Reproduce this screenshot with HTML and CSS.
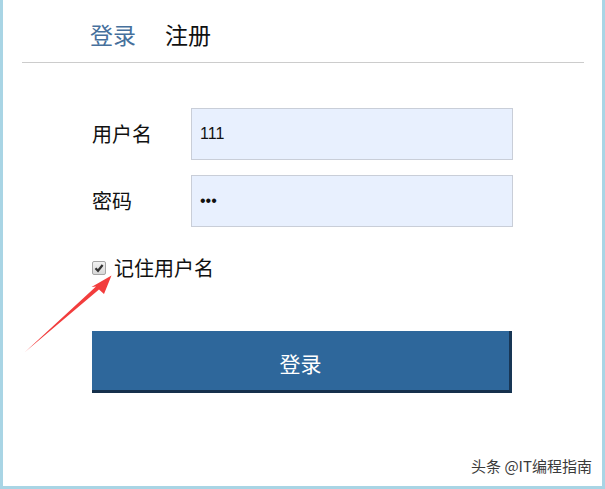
FILE: index.html
```html
<!DOCTYPE html>
<html lang="zh-CN">
<head>
<meta charset="utf-8">
<title>登录</title>
<link rel="stylesheet" href="styles.css">
</head>
<body>
<div class="frame">
  <div class="tabs">
    <span class="tab active">登录</span>
    <span class="tab">注册</span>
  </div>
  <div class="divider"></div>
  <form class="form">
    <div class="row">
      <label class="label">用户名</label>
      <input class="field" type="text" value="111">
    </div>
    <div class="row">
      <label class="label">密码</label>
      <input class="field" type="password" value="111">
    </div>
    <div class="remember">
      <span class="check"><svg width="10" height="10" viewBox="0 0 10 10"><path d="M1.5 5.2 L4 7.8 L8.6 2" fill="none" stroke="#333" stroke-width="2.2"/></svg></span>
      <span class="remember-text">记住用户名</span>
    </div>
    <button class="submit" type="button">登录</button>
  </form>
  <div class="watermark">头条 @IT编程指南</div>
</div>
<svg class="arrow" width="605" height="489" viewBox="0 0 605 489">
  <polygon points="25,352 96,286.5 91.5,287 111.5,275.5 104,294 99,289.5" fill="#f23d3d"/>
</svg>
</body>
</html>
```
FILE: styles.css
```css
html, body {
  margin: 0;
  padding: 0;
  background: #ffffff;
}
body {
  font-family: "Noto Sans CJK SC", "Noto Sans", sans-serif;
  color: #111;
}
.frame {
  position: relative;
  box-sizing: border-box;
  width: 605px;
  height: 489px;
  border: 3px solid #a9d5e5;
  border-top: none;
  background: #fff;
}
.tabs {
  display: flex;
  padding: 19px 0 0 87px;
  height: 30px;
  padding-bottom: 13px;
  align-items: center;
}
.tab {
  font-size: 23px;
  line-height: 30px;
  margin-right: 29px;
  color: #111;
}
.tab.active {
  color: #46709c;
}
.divider {
  height: 1px;
  background: #cccccc;
  margin: 0 18px 0 19px;
}
.form {
  display: flex;
  flex-direction: column;
  padding: 45px 0 0 89px;
  margin: 0;
}
.row {
  display: flex;
  align-items: center;
  height: 52px;
  margin-bottom: 15px;
}
.label {
  width: 99px;
  font-size: 20px;
  line-height: 24px;
  color: #111;
}
.field {
  box-sizing: border-box;
  width: 322px;
  height: 52px;
  margin: 0;
  padding: 0 0 0 8px;
  border: 1px solid #c9ced8;
  background: #e8f0fe;
  font-family: "Liberation Sans", Arial, sans-serif;
  font-size: 16px;
  color: #111;
  outline: none;
}
.remember {
  display: flex;
  align-items: center;
  height: 20px;
  margin-top: 16px;
}
.check {
  box-sizing: border-box;
  width: 14px;
  height: 14px;
  border: 1px solid #a5a5a5;
  border-radius: 2px;
  background: linear-gradient(#f2f2f2, #d8d8d8);
  display: flex;
  align-items: center;
  justify-content: center;
  margin-right: 8px;
}
.remember-text {
  font-size: 20px;
  line-height: 20px;
  color: #111;
}
.submit {
  box-sizing: border-box;
  width: 420px;
  height: 62px;
  margin-top: 53px;
  padding: 5px 0 0 0;
  border: none;
  border-right: 3px solid #183655;
  border-bottom: 3px solid #15304c;
  background: #2e679b;
  color: #fff;
  font-family: "Noto Sans CJK SC", sans-serif;
  font-size: 21px;
  cursor: pointer;
}
.watermark {
  position: absolute;
  right: 10px;
  bottom: 10px;
  font-size: 15px;
  line-height: 20px;
  color: #3a3a3a;
  text-shadow: 0 0 2px #fff, 1px 1px 0 #fff;
}
.arrow {
  position: absolute;
  left: 0;
  top: 0;
  pointer-events: none;
}
```
